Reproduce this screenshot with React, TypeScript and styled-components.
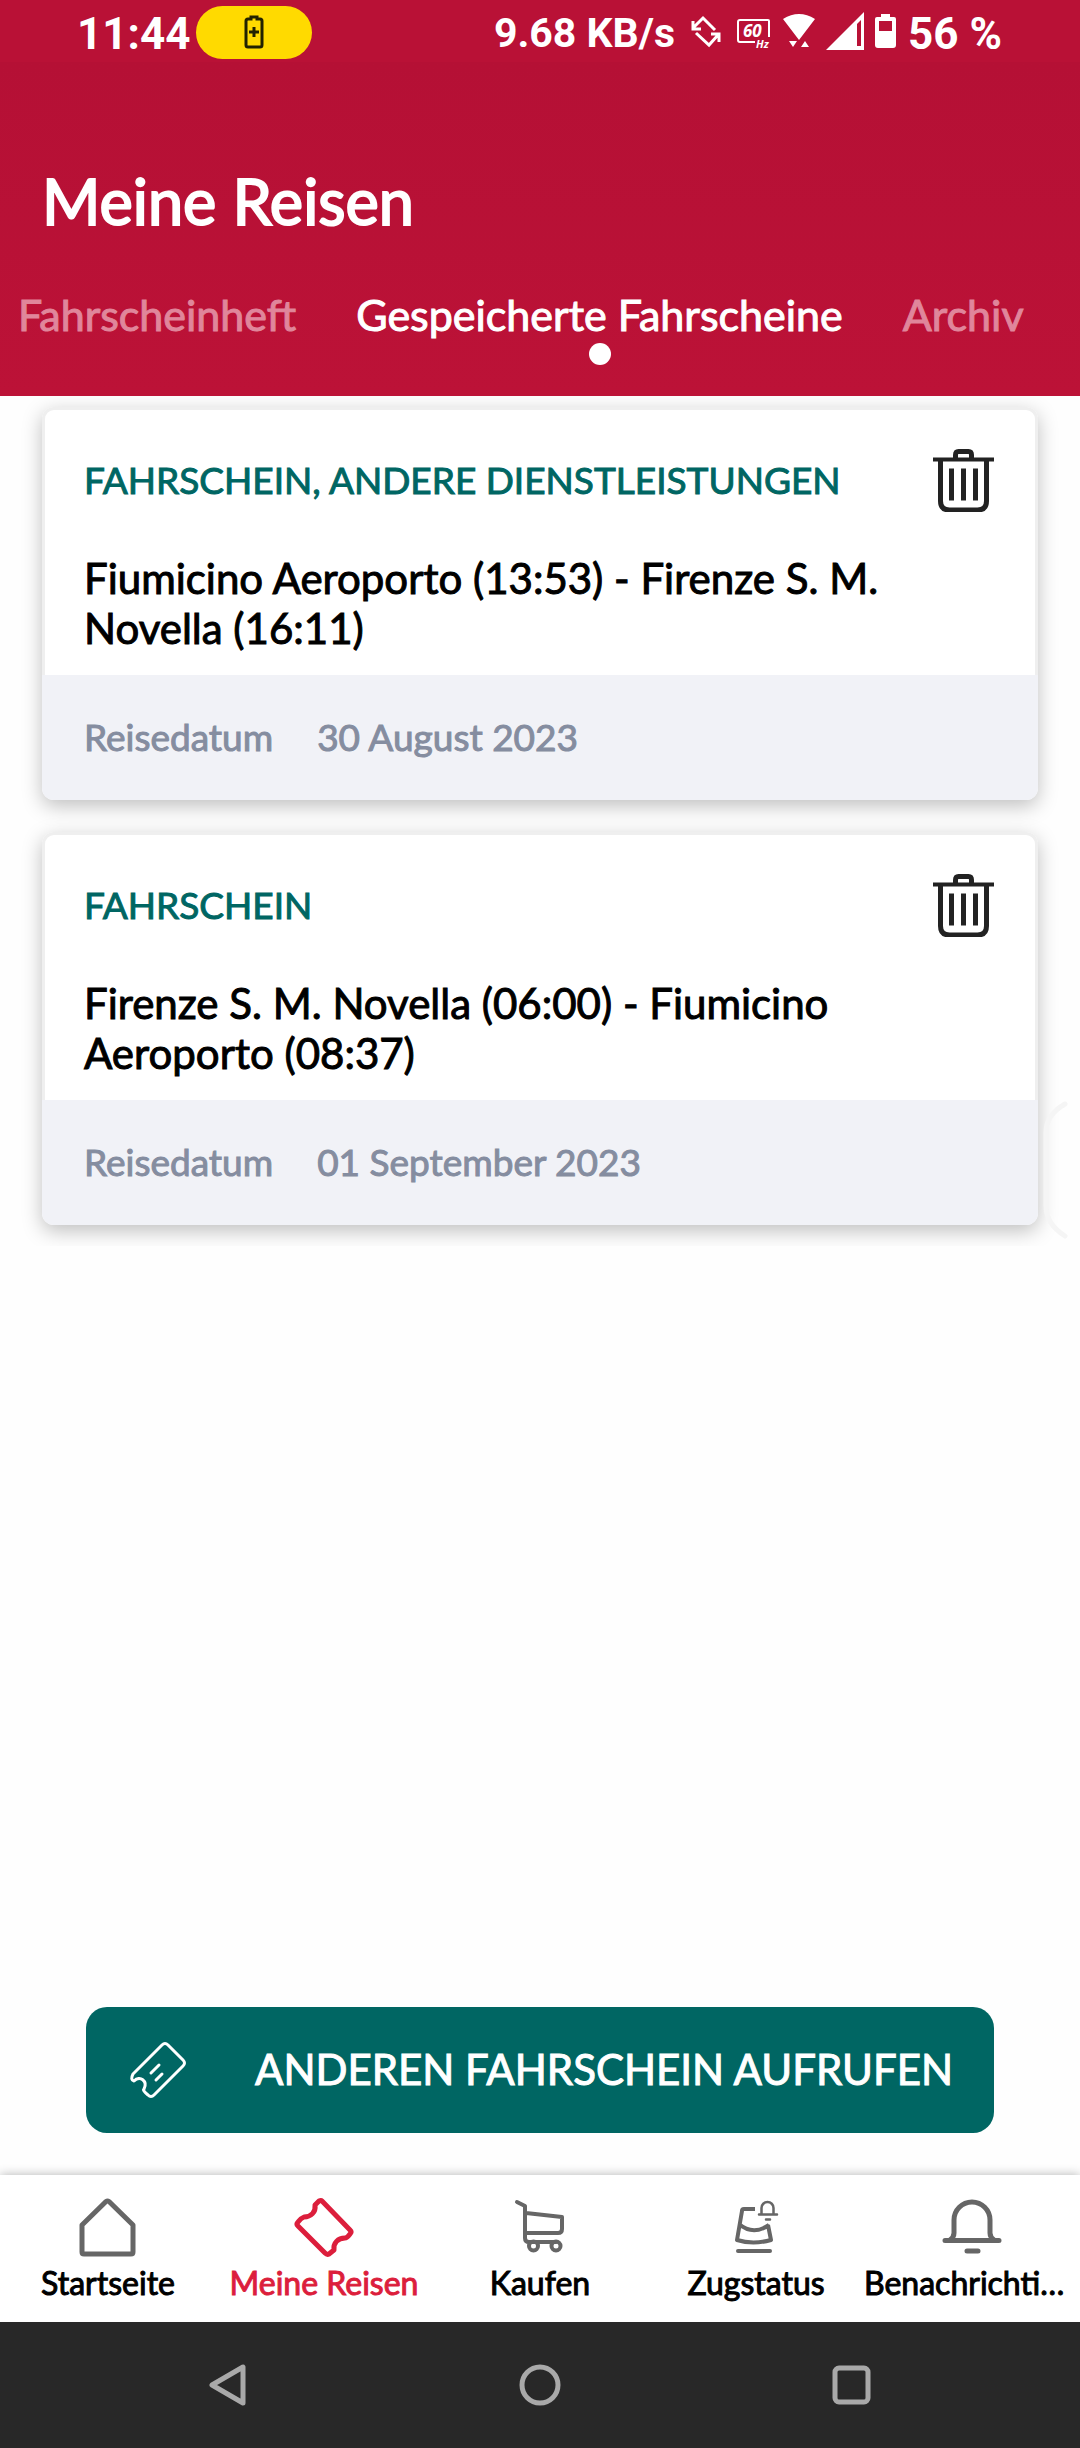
import React from 'react';
import styled, { createGlobalStyle } from 'styled-components';

const color = {
  accent: '#dc1e3c',
  teal: '#006663',
  ink: '#000000',
  muted: '#858da0',
  icon: '#666666',
  footer: '#f1f2f7',
  cardBorder: '#efefef',
  system: '#282828',
  systemIcon: '#a9a9a9',
};

const GlobalStyle = createGlobalStyle`
  *, *::before, *::after { box-sizing: border-box; }
  body {
    margin: 0;
    background: #fefefe;
    color: ${color.ink};
    font-family: Lato, "Open Sans", sans-serif;
    font-size: 42px;
    line-height: 50px;
    -webkit-text-stroke: 1px currentColor;
  }
  h1, h2, p, ul, dl, dt, dd { margin: 0; padding: 0; font-weight: 400; }
  button {
    border: 0;
    padding: 0;
    background: none;
    color: inherit;
    font: inherit;
    cursor: pointer;
  }
  svg { display: block; flex: none; }
`;

const Page = styled.div`
  display: flex;
  flex-direction: column;
  min-height: 100vh;
`;

const Header = styled.header`
  height: 396px;
  color: #ffffff;
  background: linear-gradient(#b91136 0 62px, #b51035 62px, #bc1237 100%);
`;

const StatusBar = styled.div`
  display: flex;
  align-items: center;
  justify-content: space-between;
  height: 64px;
  padding: 0 78px 0 77px;
  font-family: Roboto, sans-serif;
  font-weight: 700;
  -webkit-text-stroke: 0;
`;

const StatusGroup = styled.div<{ $gap: number }>`
  display: flex;
  align-items: center;
  gap: ${(p) => p.$gap}px;
`;

const StatusText = styled.span<{ $large?: boolean }>`
  font-size: ${(p) => (p.$large ? 44 : 41)}px;
  padding-top: ${(p) => (p.$large ? 4 : 2)}px;
  white-space: nowrap;
`;

const ChargePill = styled.span`
  display: flex;
  align-items: center;
  justify-content: center;
  width: 116px;
  height: 53px;
  border-radius: 27px;
  background: #ffda00;
`;

const Title = styled.h1`
  padding: 99px 42px 0;
  font-size: 63px;
  line-height: 76px;
  -webkit-text-stroke: 2px currentColor;
`;

const Tabs = styled.div`
  display: flex;
  gap: 60px;
  padding: 51px 18px 0;
  overflow: hidden;
`;

const Tab = styled.button<{ $active?: boolean }>`
  display: flex;
  flex: none;
  flex-direction: column;
  align-items: center;
  gap: 3px;
  color: ${(p) => (p.$active ? '#ffffff' : '#e0869b')};
  font-size: 43px;
  white-space: nowrap;

  &::after {
    content: '';
    width: 22px;
    height: 22px;
    border-radius: 50%;
    background: ${(p) => (p.$active ? '#ffffff' : 'transparent')};
  }
`;

const Main = styled.main`
  position: relative;
  display: flex;
  flex: 1;
  flex-direction: column;
  justify-content: space-between;
`;

const TripList = styled.ul`
  display: flex;
  flex-direction: column;
  gap: 32px;
  padding: 11px 42px 21px;
  overflow: hidden;
  list-style: none;
`;

const Card = styled.li`
  border-radius: 12px;
  box-shadow: 0 6px 20px rgba(0, 0, 0, 0.25);
`;

const CardBody = styled.div`
  padding: 38px 39px 22px;
  border: 3px solid ${color.cardBorder};
  border-bottom: 0;
  border-radius: 12px 12px 0 0;
  background: #ffffff;
`;

const CardTop = styled.div`
  display: flex;
  align-items: center;
  justify-content: space-between;
  height: 64px;
  margin-bottom: 41px;
`;

const Kind = styled.p`
  color: ${color.teal};
  font-size: 37px;
  line-height: 44px;
`;

const Route = styled.h2`
  font-size: 42px;
  line-height: 50px;
`;

const CardFooter = styled.dl`
  display: flex;
  align-items: center;
  gap: 44px;
  height: 125px;
  padding: 0 42px 2px;
  border-radius: 0 0 12px 12px;
  background: ${color.footer};
  color: ${color.muted};
  font-size: 37px;
  line-height: 44px;
`;

const EdgeHandle = styled.svg`
  position: absolute;
  top: 704px;
  right: 12px;
`;

const Action = styled.button`
  display: flex;
  align-items: center;
  height: 126px;
  margin: 0 86px 42px;
  padding: 0 41px;
  border-radius: 21px;
  background: ${color.teal};
  color: #ffffff;
`;

const ActionLabel = styled.span`
  flex: 1;
  padding-bottom: 2px;
  text-align: right;
`;

const BottomNav = styled.nav`
  position: relative;
  display: grid;
  grid-template-columns: repeat(5, 1fr);
  height: 147px;
  padding-top: 21px;
  background: #ffffff;
  box-shadow: 0 0 10px rgba(0, 0, 0, 0.3);
`;

const NavItem = styled.button<{ $active?: boolean }>`
  display: flex;
  flex-direction: column;
  align-items: center;
  gap: 4px;
  min-width: 0;
  color: ${(p) => (p.$active ? color.accent : color.ink)};
  font-size: 32px;
  line-height: 38px;

  svg { color: ${(p) => (p.$active ? color.accent : color.icon)}; }
`;

const NavLabel = styled.span`
  max-width: 100%;
  overflow: hidden;
  text-overflow: ellipsis;
  white-space: nowrap;
`;

const SystemBar = styled.div`
  position: relative;
  display: grid;
  grid-template-columns: repeat(3, 1fr);
  height: 126px;
  padding: 0 72px;
  background: ${color.system};
`;

const SystemButton = styled.button`
  display: flex;
  align-items: center;
  justify-content: center;
`;

const ChargingIcon = () => (
  <svg width="20" height="34" viewBox="0 0 20 34" fill="none" stroke="#222200" strokeWidth="3">
    <path d="M7 4V2h6v2h3q2 0 2 2v24q0 2-2 2H4q-2 0-2-2V6q0-2 2-2z" />
    <path d="M10 12v10M5 17h10" />
  </svg>
);

const RotateIcon = () => (
  <svg width="34" height="40" viewBox="0 0 34 40" fill="none" stroke="#fff" strokeWidth="3">
    <path d="M24 18 12 6 3 15M2 9v8h8M5 21l13 12 9-10M20 22h8v8" />
  </svg>
);

const RefreshRateIcon = () => (
  <svg width="36" height="40" viewBox="0 0 36 40" fill="none" stroke="#fff" strokeWidth="2">
    <path d="M33 25V9q0-1-1-1H4Q2 8 2 10v18q0 2 2 2h15" />
    <g
      fill="#fff"
      stroke="none"
      fontFamily="Open Sans, sans-serif"
      fontStyle="italic"
      fontWeight="700"
    >
      <text x="7" y="25" fontSize="17">60</text>
      <text x="20" y="36" fontSize="11">Hz</text>
    </g>
  </svg>
);

const WifiIcon = () => (
  <svg width="32" height="40" viewBox="0 0 32 40" fill="#fff">
    <path d="M0 7Q16-3 32 7L16 28zM6 29h8l-4 6zM18 35h8l-4-6z" />
  </svg>
);

const SignalIcon = () => (
  <svg width="38" height="40" viewBox="0 0 38 40" fill="#fff" fillRule="evenodd">
    <path d="M38 0v38H0zM31 12v22h4V8z" />
  </svg>
);

const BatteryIcon = () => (
  <svg width="22" height="40" viewBox="0 0 22 40" fill="#fff" fillRule="evenodd">
    <path d="M6 5V2h9v3h4q2 0 2 2v26q0 3-3 3H3q-3 0-3-3V7q0-2 2-2zM4 9v10h13V9z" />
  </svg>
);

const TrashIcon = () => (
  <svg width="64" height="64" viewBox="0 0 64 64" fill="none" stroke="#222" strokeWidth="5">
    <path d="M1 11.500h61" strokeWidth="4" />
    <path d="M23.500 11V7q0-3.500 3-3.500h10q3 0 3 3.500v4" />
    <path d="M8.500 12v41q0 9 9 9h28q9 0 9-9V12" />
    <path d="M19.500 20.500v32M31.500 20.500v32M43.500 20.500v32" />
  </svg>
);

const OpenTicketIcon = () => (
  <svg
    width="62"
    height="62"
    viewBox="0 0 62 62"
    fill="none"
    stroke="#fff"
    strokeWidth="3"
    strokeLinecap="round"
    strokeLinejoin="round"
  >
    <path d="M35 6q3-3 6 0l15 15q3 3 0 6L27 56q-3 3-6 0-6-5-4-6c4-8-4-14-10-8Q3 41 6 35z" />
    <path d="m24 34 8-8M29 41l6-6" />
  </svg>
);

const navSvg = {
  width: 64,
  height: 64,
  viewBox: '0 0 64 64',
  fill: 'none',
  stroke: 'currentColor',
  strokeLinecap: 'round' as const,
  strokeLinejoin: 'round' as const,
  'aria-hidden': true,
};

const HomeIcon = () => (
  <svg {...navSvg} strokeWidth="5">
    <path d="M30 5.500q1.500-1 3 0L57 29v27q0 2-2 2H8q-2 0-2-2V29z" />
  </svg>
);

const TicketIcon = () => (
  <svg {...navSvg} strokeWidth="5">
    <path d="M27 5q2-1 3 0l28 29q2 2 0 4-3 4-5 4c-7 0-12 5-11 12l-5 4q-2 1-4-1L6 30q-2-2 0-4 3-4 6-5c7 0 12-5 11-12z" />
  </svg>
);

const CartIcon = () => (
  <svg {...navSvg} strokeWidth="4">
    <path d="m9 6 8 4v32q0 4 4 4h27M18 17l36 4v12q0 4-4 4H18" />
    <circle cx="25.500" cy="50" r="4.500" />
    <circle cx="48" cy="50" r="4.500" />
  </svg>
);

const TrainIcon = () => (
  <svg {...navSvg} strokeWidth="4">
    <path strokeLinecap="butt" d="M31 13H20q-2 0-2 2l-5 29q16 5 34 0l-3-15M15 28q14 12 30 1" />
    <path d="M14 55h32" />
    <path strokeWidth="2.500" d="M35 18.500h18M37.500 18v-6a6 6 0 0 1 12 0v6M42 23.500h4" />
  </svg>
);

const BellIcon = () => (
  <svg {...navSvg} strokeWidth="5">
    <path d="M5 44.500h54M10 44q4-3 4-7V24a18 18 0 0 1 36 0v13q0 4 4 7M27 55h11" />
  </svg>
);

const BackIcon = () => (
  <svg width="42" height="42" viewBox="0 0 42 42" fill="none" stroke={color.systemIcon} strokeWidth="5" strokeLinejoin="round">
    <path d="M36 3v36L5 21z" />
  </svg>
);

const CircleIcon = () => (
  <svg width="42" height="42" viewBox="0 0 42 42" fill="none" stroke={color.systemIcon} strokeWidth="5">
    <circle cx="21" cy="21" r="18" />
  </svg>
);

const SquareIcon = () => (
  <svg width="42" height="42" viewBox="0 0 42 42" fill="none" stroke={color.systemIcon} strokeWidth="5">
    <rect x="4" y="4" width="33" height="34" rx="4" />
  </svg>
);

const trips = [
  {
    kind: 'FAHRSCHEIN, ANDERE DIENSTLEISTUNGEN',
    route: 'Fiumicino Aeroporto (13:53) - Firenze S. M. Novella (16:11)',
    date: '30 August 2023',
  },
  {
    kind: 'FAHRSCHEIN',
    route: 'Firenze S. M. Novella (06:00) - Fiumicino Aeroporto (08:37)',
    date: '01 September 2023',
  },
];

const destinations = [
  { label: 'Startseite', Icon: HomeIcon },
  { label: 'Meine Reisen', Icon: TicketIcon, active: true },
  { label: 'Kaufen', Icon: CartIcon },
  { label: 'Zugstatus', Icon: TrainIcon },
  { label: 'Benachrichtigungen', Icon: BellIcon },
];

export default function App() {
  return (
    <Page>
      <GlobalStyle />
      <Header>
        <StatusBar>
          <StatusGroup $gap={6}>
            <StatusText $large>11:44</StatusText>
            <ChargePill><ChargingIcon /></ChargePill>
          </StatusGroup>
          <StatusGroup $gap={16}>
            <StatusText>9.68 KB/s</StatusText>
            <StatusGroup $gap={11}>
              <RotateIcon />
              <RefreshRateIcon />
              <WifiIcon />
              <SignalIcon />
              <BatteryIcon />
              <StatusText $large>56 %</StatusText>
            </StatusGroup>
          </StatusGroup>
        </StatusBar>
        <Title>Meine Reisen</Title>
        <Tabs role="tablist">
          <Tab role="tab">Fahrscheinheft</Tab>
          <Tab role="tab" aria-selected $active>Gespeicherte Fahrscheine</Tab>
          <Tab role="tab">Archiv</Tab>
        </Tabs>
      </Header>

      <Main>
        <TripList>
          {trips.map((trip) => (
            <Card key={trip.date}>
              <CardBody>
                <CardTop>
                  <Kind>{trip.kind}</Kind>
                  <button aria-label="Löschen"><TrashIcon /></button>
                </CardTop>
                <Route>{trip.route}</Route>
              </CardBody>
              <CardFooter>
                <dt>Reisedatum</dt>
                <dd>{trip.date}</dd>
              </CardFooter>
            </Card>
          ))}
        </TripList>
        <EdgeHandle width="26" height="140" viewBox="0 0 26 140" fill="none" stroke="#f5f5f5" strokeWidth="5" strokeLinecap="round" aria-hidden>
          <path d="M23 4Q4 15 4 32v74q0 18 19 30" />
        </EdgeHandle>
        <Action>
          <OpenTicketIcon />
          <ActionLabel>ANDEREN FAHRSCHEIN AUFRUFEN</ActionLabel>
        </Action>
      </Main>

      <BottomNav>
        {destinations.map(({ label, Icon, active }) => (
          <NavItem key={label} $active={active}>
            <Icon />
            <NavLabel>{label}</NavLabel>
          </NavItem>
        ))}
      </BottomNav>
      <SystemBar>
        <SystemButton aria-label="Zurück"><BackIcon /></SystemButton>
        <SystemButton aria-label="Start"><CircleIcon /></SystemButton>
        <SystemButton aria-label="Übersicht"><SquareIcon /></SystemButton>
      </SystemBar>
    </Page>
  );
}
